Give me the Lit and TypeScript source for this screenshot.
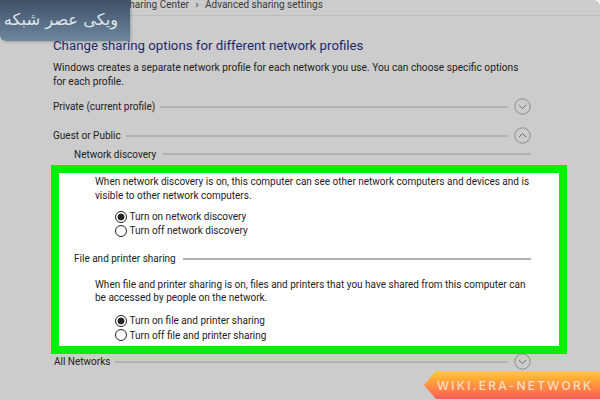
import { LitElement, html, css } from 'lit';
import { customElement } from 'lit/decorators.js';

const chevron = (up: boolean) => html`
  <svg class="chevron" viewBox="0 0 17 17" width="17" height="17">
    <circle cx="8.5" cy="8.5" r="7.7" fill="none" stroke="#8c8c8c" stroke-width="1"></circle>
    <path d=${up ? 'M4.8 10.2 8.5 6.6l3.7 3.6' : 'M4.8 7 8.5 10.6 12.2 7'} fill="none" stroke="#6e6e6e" stroke-width="1"></path>
  </svg>
`;

@customElement('app-root')
export class AppRoot extends LitElement {
  static styles = css`
    :host {
      display: block;
      position: relative;
      width: 600px;
      height: 400px;
      overflow: hidden;
      background: #cccccc;
      color: #222;
      font-family: 'Roboto', 'Noto Sans', sans-serif;
      font-size: 10px;
    }

    .crumbs {
      display: flex;
      align-items: flex-end;
      gap: 6.5px;
      height: 15px;
      margin-left: -5px;
      border-bottom: 1px solid #bcbcbc;
      color: #3a3a3a;
      line-height: 8px;
      overflow: hidden;
      white-space: nowrap;
    }

    .crumbs span { display: block; padding-bottom: 6px; }

    .content {
      padding: 0 69px 0 53px;
    }

    h1 {
      margin: 21px 0 0;
      font-size: 13.25px;
      font-weight: 400;
      line-height: 18px;
      color: #1c2a6b;
    }

    .intro {
      margin: 6px 0 0;
      font-size: 10.2px;
      line-height: 14px;
      width: 480px;
    }

    .section {
      display: flex;
      align-items: center;
      gap: 5px;
      height: 17px;
      white-space: nowrap;
    }

    .section .rule {
      flex: 1;
      height: 2px;
      background: #b2b2b2;
    }

    .profile { margin-top: 9px; }
    .guest { margin-top: 12px; }

    .chevron { flex: none; margin-left: 1px; }

    .sub {
      gap: 7px;
      height: 14px;
      margin: 3px 0 0 21px;
      width: 457px;
    }

    .frame {
      width: 500px;
      height: 173px;
      margin: 4px 0 0 -2px;
      border: 8px solid #00f000;
      background: #fff;
      color: #222;
    }

    .frame .sub { margin: 0; width: 457px; margin-left: 15px; }

    .text {
      margin: 0 0 0 36px;
      line-height: 13.5px;
      width: 440px;
    }

    .first { padding-top: 2px; }

    .radios {
      display: grid;
      row-gap: 2px;
      margin: 8.5px 0 0 56px;
    }

    .radios.second { margin-top: 10px; row-gap: 2.5px; }

    .radio {
      display: flex;
      align-items: center;
      gap: 2.5px;
      height: 12px;
    }

    .dot {
      box-sizing: border-box;
      width: 12px;
      height: 12px;
      border: 1px solid #222;
      border-radius: 50%;
      background: #fff;
    }

    .dot.on { background: radial-gradient(circle, #222 0 3px, #fff 3.8px); }

    .file { margin-top: 15px !important; }
    .file-text { margin-top: 12px; }

    .all {
      margin: -1px 0 0 1px;
      width: 477px;
      position: relative;
    }

    .logo {
      position: absolute;
      top: 0;
      left: 0;
      width: 130px;
      height: 41px;
      display: flex;
      align-items: center;
      justify-content: center;
      border-bottom-left-radius: 6px;
      background: linear-gradient(180deg, #3f4f66 0%, #6d889f 100%);
      box-shadow: 1px 1px 3px rgba(0, 0, 0, 0.25);
      color: #dfe4e8;
      font-family: 'DejaVu Sans', sans-serif;
      font-size: 16.3px;
      padding: 0 8px 2px 0;
      box-sizing: border-box;
    }

    .corner {
      position: absolute;
      top: 0;
      right: 0;
      width: 6px;
      height: 6px;
      background: radial-gradient(circle at 0 100%, transparent 5.5px, #f4f4f4 6.2px);
    }

    .banner {
      position: absolute;
      left: 424px;
      top: 371px;
      width: 176px;
      height: 28px;
      display: flex;
      align-items: center;
      box-sizing: border-box;
      padding-left: 13px;
      clip-path: polygon(0 50%, 12px 0, 100% 0, 100% 100%, 12px 100%);
      background: linear-gradient(180deg, #ffca2c 0%, #ff5c55 100%);
      color: #ffdcc0;
      font-family: 'Inter', sans-serif;
      font-size: 12px;
      font-weight: 500;
      letter-spacing: 2.25px;
      white-space: nowrap;
    }
  `;

  render() {
    return html`
      <div class="crumbs">
        <span>and Internet</span><span>›</span>
        <span>Network and Sharing Center</span><span>›</span>
        <span>Advanced sharing settings</span>
      </div>
      <div class="content">
        <h1>Change sharing options for different network profiles</h1>
        <p class="intro">Windows creates a separate network profile for each network you use. You can choose specific options for each profile.</p>
        <div class="section profile"><span>Private (current profile)</span><div class="rule"></div>${chevron(false)}</div>
        <div class="section guest"><span>Guest or Public</span><div class="rule"></div>${chevron(true)}</div>
        <div class="section sub"><span>Network discovery</span><div class="rule"></div></div>
        <div class="frame">
          <p class="text first">When network discovery is on, this computer can see other network computers and devices and is visible to other network computers.</p>
          <div class="radios">
            <div class="radio"><span class="dot on"></span>Turn on network discovery</div>
            <div class="radio"><span class="dot"></span>Turn off network discovery</div>
          </div>
          <div class="section sub file"><span>File and printer sharing</span><div class="rule"></div></div>
          <p class="text file-text">When file and printer sharing is on, files and printers that you have shared from this computer can be accessed by people on the network.</p>
          <div class="radios second">
            <div class="radio"><span class="dot on"></span>Turn on file and printer sharing</div>
            <div class="radio"><span class="dot"></span>Turn off file and printer sharing</div>
          </div>
        </div>
        <div class="section all"><span>All Networks</span><div class="rule"></div>${chevron(false)}</div>
      </div>
      <div class="corner"></div>
      <div class="logo" dir="rtl">ویکی عصر شبکه</div>
      <div class="banner">WIKI.ERA-NETWORK</div>
    `;
  }
}
